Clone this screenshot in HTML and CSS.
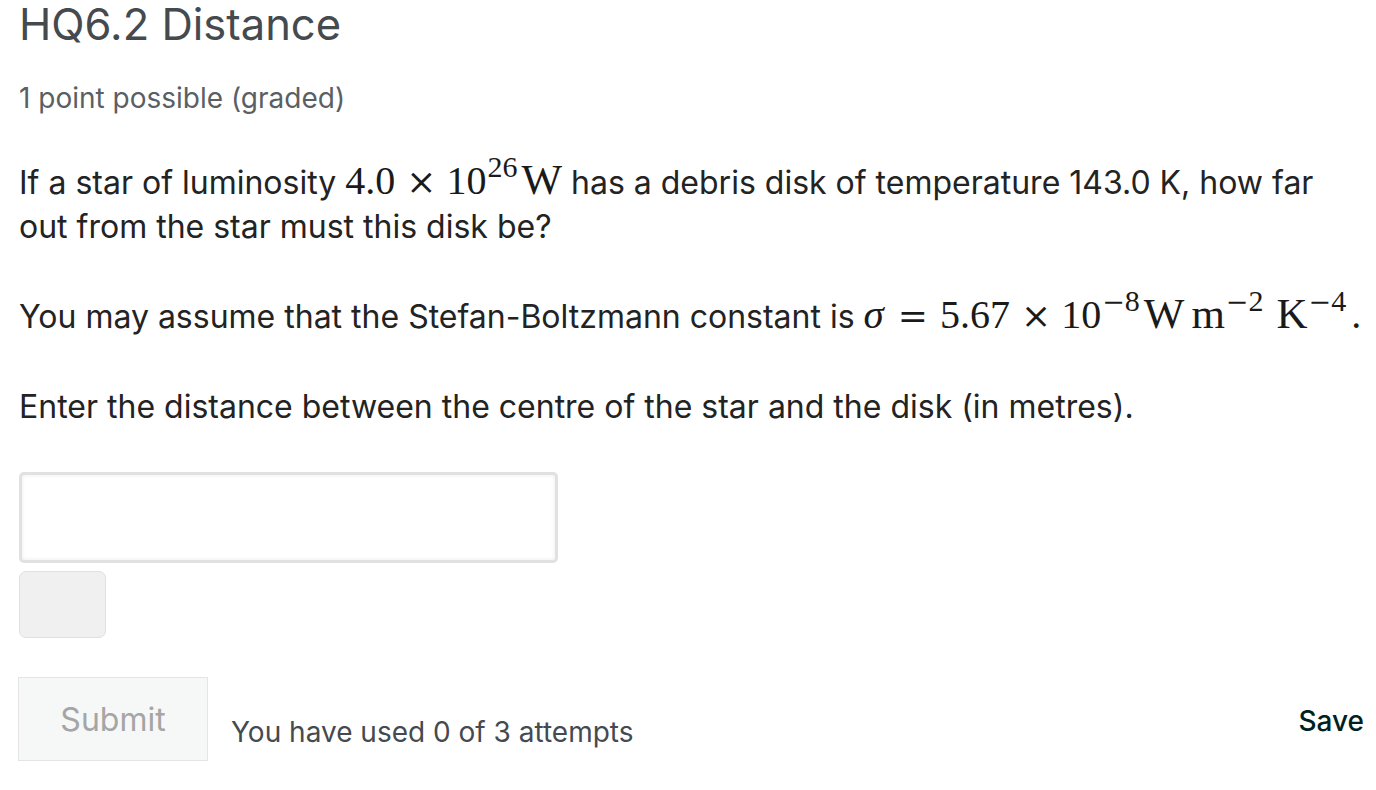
FILE: index.html
```html
<!DOCTYPE html>
<html>
<head>
<meta charset="utf-8">
<link rel="stylesheet" href="styles.css">
</head>
<body>
<div class="problem">
  <h2 class="title">HQ6.2 Distance</h2>
  <div class="points">1 point possible (graded)</div>
  <p class="para first">If a star of luminosity <span class="math"><span class="num">4.0</span><span class="bin">×</span><span class="num">10</span><sup class="sup">26</sup><span class="unit">W</span></span> has a debris disk of temperature 143.0 K, how far out from the star must this disk be?</p>
  <p class="para">You may assume that the Stefan-Boltzmann constant is <span class="math"><i class="var">σ</i><span class="rel">=</span><span class="num">5.67</span><span class="bin">×</span><span class="num">10</span><sup class="sup"><span class="minus">−</span>8</sup><span class="unit">W</span><span class="unit gap">m</span><sup class="sup"><span class="minus">−</span>2</sup><span class="unit wide">K</span><sup class="sup"><span class="minus">−</span>4</sup><span class="dot">.</span></span></p>
  <p class="para">Enter the distance between the centre of the star and the disk (in metres).</p>
  <div class="answer">
    <input class="field" type="text">
    <div class="preview"></div>
  </div>
  <div class="actions">
    <button class="submit">Submit</button>
    <span class="attempts">You have used 0 of 3 attempts</span>
    <span class="save">Save</span>
  </div>
</div>
</body>
</html>
```
FILE: styles.css
```css
html, body {
  margin: 0;
  padding: 0;
  background: #ffffff;
}
body {
  font-family: Inter, "Noto Sans", sans-serif;
  color: #222222;
}
.problem {
  padding: 0 8px 0 19px;
}
.title {
  margin: 0;
  font-weight: 400;
  font-size: 43.5px;
  line-height: 48px;
  color: #454a4f;
}
.points {
  margin-top: 30px;
  font-size: 28px;
  line-height: 40px;
  color: #5a5f64;
}
.para {
  margin: 46px 0 0 0;
  font-size: 32px;
  line-height: 44px;
  color: #232323;
}
.para.first {
  margin-top: 43px;
}
.math {
  font-family: "Liberation Serif", "DejaVu Serif", serif;
  font-size: 40px;
  line-height: 0;
  color: #1a1a1a;
  white-space: nowrap;
}
.var {
  font-style: italic;
  font-size: 41px;
  margin-right: 2px;
}
.sup {
  font-size: 30px;
  line-height: 0;
  vertical-align: 17px;
  margin-left: 1px;
}
.minus {
  font-family: "DejaVu Serif", serif;
  font-size: 27px;
}
.bin, .rel {
  font-family: "DejaVu Serif", serif;
  font-size: 36px;
}
.bin {
  margin: 0 10px 0 11px;
}
.rel {
  margin: 0 12px;
}
.unit {
  font-size: 43px;
  margin-left: 4px;
}
.unit.gap {
  margin-left: 7px;
}
.unit.wide {
  margin-left: 13px;
}
.dot {
  margin-left: 5px;
}
.answer {
  margin-top: 43px;
  display: flex;
  flex-direction: column;
  gap: 8px;
}
.field {
  box-sizing: border-box;
  width: 539px;
  height: 91px;
  border: 3px solid #e1e1e1;
  border-radius: 5px;
  box-shadow: inset 0 0 4px rgba(0,0,0,0.08);
  background: #fff;
  margin: 0;
}
.preview {
  box-sizing: border-box;
  width: 87px;
  height: 67px;
  background: #f0f0f0;
  border: 1px solid #e0e0e0;
  border-radius: 7px;
}
.actions {
  margin-top: 39px;
  display: flex;
  align-items: flex-start;
}
.submit {
  box-sizing: border-box;
  width: 190px;
  height: 84px;
  background: #f6f7f7;
  border: 1px solid #e4e4e4;
  border-radius: 0;
  font-family: Inter, "Noto Sans", sans-serif;
  font-size: 32px;
  color: #a5a5a5;
  padding: 0;
  margin: 0 0 0 -1px;
}
.attempts {
  margin-left: 23px;
  margin-top: 38px;
  font-size: 28px;
  color: #454a4f;
}
.save {
  margin-left: auto;
  margin-top: 27px;
  margin-right: 4px;
  font-size: 28px;
  font-weight: 500;
  color: #002121;
}
```
